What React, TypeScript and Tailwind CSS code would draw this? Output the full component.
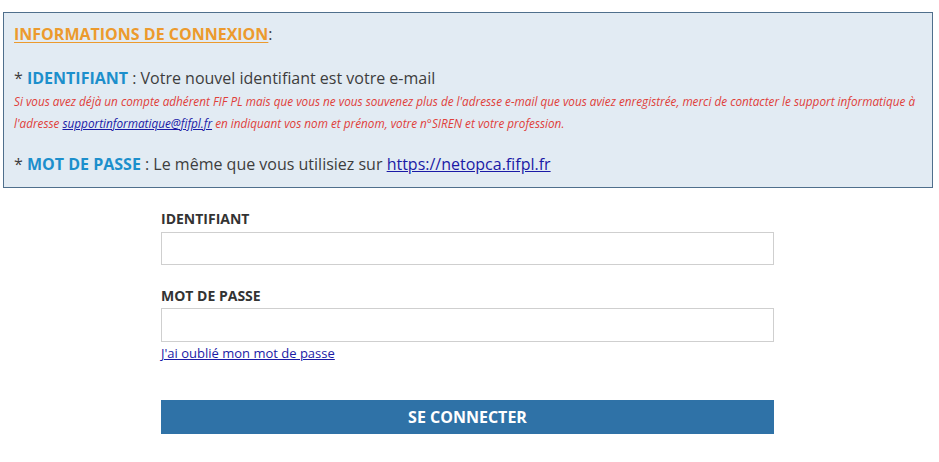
import React from "react";

const font = { fontFamily: '"Open Sans", "Liberation Sans", sans-serif' };

const InfoBox = () => {
  return (
    <div className="ml-[3px] mt-[12px] w-[930px] h-[176px] border border-[#4f6f8c] bg-[#e2ebf3] px-[10px] pt-[9px] text-[#3d3d3d]">
      <p className="text-[16px] leading-[24px]">
        <span className="font-bold text-[#ec9a2d] underline underline-offset-2">
          INFORMATIONS DE CONNEXION
        </span>
        :
      </p>

      <p className="mt-[20px] text-[16px] leading-[24px]">
        * <span className="font-bold text-[#1c8fcc]">IDENTIFIANT</span> : Votre
        nouvel identifiant est votre e-mail
      </p>
      <p className="text-[11.75px] leading-[22px] italic text-[#e0403a]">
        Si vous avez déjà un compte adhérent FIF PL mais que vous ne vous
        souvenez plus de l'adresse e-mail que vous aviez enregistrée, merci de
        contacter le support informatique à l'adresse{" "}
        <a href="#" className="text-[#1a1aa6] underline">
          supportinformatique@fifpl.fr
        </a>{" "}
        en indiquant vos nom et prénom, votre n°SIREN et votre profession.
      </p>

      <p className="mt-[18px] text-[16px] leading-[24px]">
        * <span className="font-bold text-[#1c8fcc]">MOT DE PASSE</span> : Le
        même que vous utilisiez sur{" "}
        <a href="#" className="text-[#1a1aa6] underline">
          https://netopca.fifpl.fr
        </a>
      </p>
    </div>
  );
};

const LoginForm = () => {
  return (
    <form className="ml-[161px] mt-[21px] w-[613px] flex flex-col">
      <label className="text-[14px] leading-[20px] font-bold text-[#333]">
        IDENTIFIANT
      </label>
      <input
        type="text"
        className="mt-[3px] h-[33px] border border-[#cfcfcf] bg-white outline-none"
      />

      <label className="mt-[21px] text-[14px] leading-[20px] font-bold text-[#333]">
        MOT DE PASSE
      </label>
      <input
        type="password"
        className="mt-[2px] h-[34px] border border-[#cfcfcf] bg-white outline-none"
      />
      <a href="#" className="mt-[2px] text-[13px] leading-[18px] text-[#1a1aa6] underline self-start">
        J'ai oublié mon mot de passe
      </a>

      <button
        type="submit"
        className="mt-[38px] h-[34px] bg-[#2f72a7] text-white font-bold text-[16px]"
      >
        SE CONNECTER
      </button>
    </form>
  );
};

export default function App() {
  return (
    <div className="bg-white w-[939px] h-[462px] overflow-hidden" style={font}>
      <InfoBox />
      <LoginForm />
    </div>
  );
}
